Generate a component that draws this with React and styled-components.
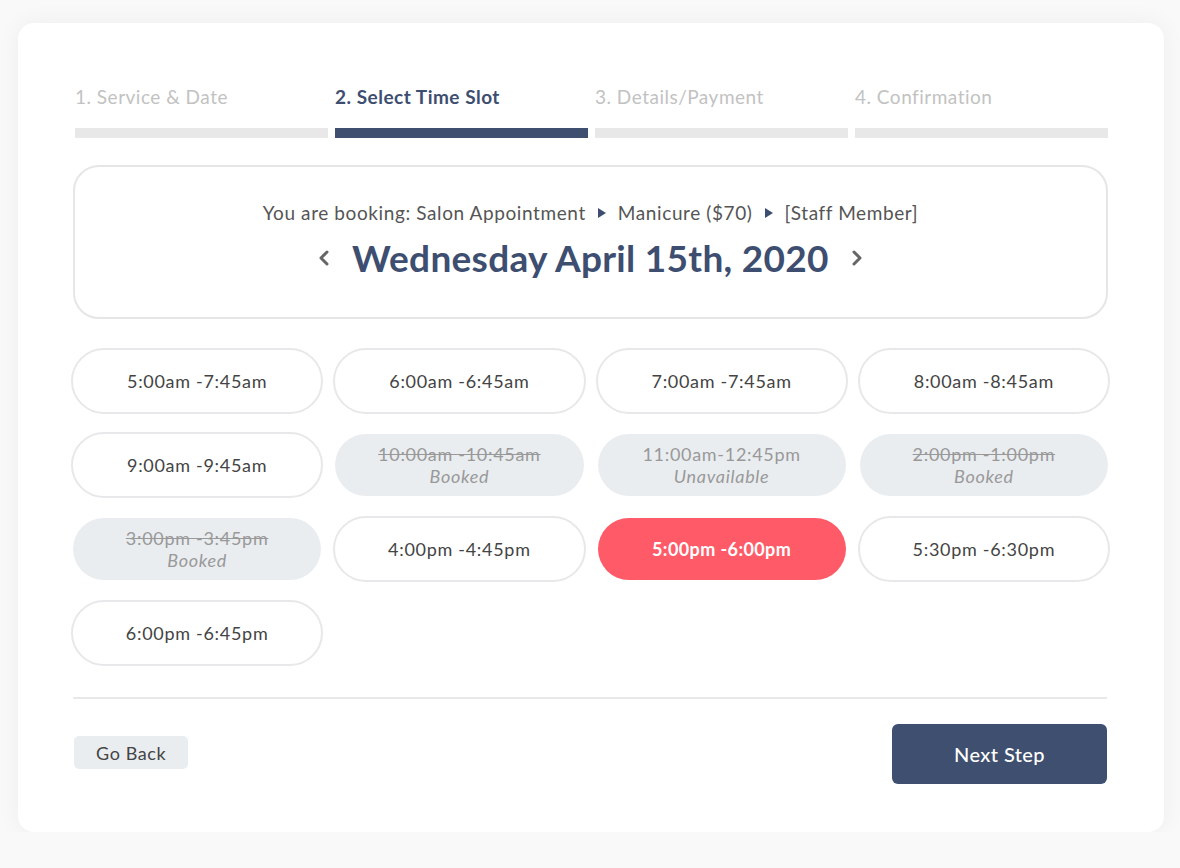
import React, { useState } from 'react';
import styled, { createGlobalStyle, css } from 'styled-components';

const GlobalStyle = createGlobalStyle`
  body {
    margin: 0;
    background: #f9f9f9;
    font-family: Lato, "Open Sans", sans-serif;
  }
`;

const Card = styled.div`
  box-sizing: border-box;
  width: 1146px;
  height: 809px;
  margin: 23px 0 0 18px;
  padding: 62px 54px 49px 53px;
  background: #fff;
  border-radius: 16px;
  box-shadow: 0 0 24px rgba(0, 0, 0, 0.05);
`;

const Steps = styled.div`
  display: grid;
  grid-template-columns: repeat(4, 1fr);
  gap: 7px;
  margin: 0 2px 0 4px;
`;

const Step = styled.div`
  display: flex;
  flex-direction: column;
  gap: 19px;
  font-size: 19px;
  line-height: 24px;
  letter-spacing: 0.5px;
  color: ${p => (p.active ? '#3d4e70' : '#c2c2c2')};
  font-weight: ${p => (p.active ? 700 : 400)};

  &::after {
    content: '';
    height: 10px;
    background: ${p => (p.active ? '#3f4f70' : '#e8e8e8')};
  }
`;

const BookingBox = styled.div`
  margin: 27px 2px 0 2px;
  height: 154px;
  box-sizing: border-box;
  border: 2px solid #e6e6e6;
  border-radius: 26px;
  padding-top: 34px;
  display: flex;
  flex-direction: column;
  align-items: center;
`;

const Crumbs = styled.div`
  display: flex;
  align-items: center;
  gap: 12px;
  font-size: 19px;
  line-height: 24px;
  letter-spacing: 0.6px;
  color: #555;
`;

const Arrow = styled.span`
  width: 0;
  height: 0;
  border-top: 5px solid transparent;
  border-bottom: 5px solid transparent;
  border-left: 8px solid #3d4e70;
`;

const DateRow = styled.div`
  display: flex;
  align-items: center;
  gap: 22px;
  margin-top: 10px;
`;

const DateTitle = styled.h1`
  margin: 0;
  font-size: 37px;
  line-height: 46px;
  letter-spacing: 0.3px;
  font-weight: 700;
  color: #3d4e70;
`;

const NavButton = styled.button`
  border: 0;
  background: none;
  padding: 0;
  display: flex;
  color: #666;
  cursor: pointer;
`;

const Grid = styled.div`
  display: grid;
  grid-template-columns: repeat(4, 1fr);
  column-gap: 10px;
  row-gap: 18px;
  margin-top: 29px;
`;

const Slot = styled.button`
  height: 66px;
  box-sizing: border-box;
  border-radius: 33px;
  border: 2px solid #e8e8ea;
  background: #fff;
  background-clip: padding-box;
  font-family: inherit;
  font-size: 18px;
  letter-spacing: 0.7px;
  color: #444;
  display: flex;
  flex-direction: column;
  align-items: center;
  justify-content: center;
  cursor: pointer;

  ${p =>
    p.disabled &&
    css`
      border-color: transparent;
      background: #eaedf0;
      background-clip: padding-box;
      color: #999;
      cursor: default;
      line-height: 22px;
    `}

  ${p =>
    p.selected &&
    css`
      border-color: transparent;
      background: #ff5a67;
      background-clip: padding-box;
      color: #fff;
      font-weight: 700;
      letter-spacing: 0.4px;
    `}
`;

const SlotTime = styled.span`
  text-decoration: ${p => (p.struck ? 'line-through' : 'none')};
`;

const SlotNote = styled.span`
  font-style: italic;
`;

const Divider = styled.hr`
  margin: 31px 3px 0 2px;
  border: 0;
  height: 2px;
  background: #e8e8e8;
`;

const Footer = styled.div`
  display: flex;
  justify-content: space-between;
  align-items: center;
  margin: 25px 3px 0 3px;
`;

const BackButton = styled.button`
  height: 33px;
  margin-top: -3px;
  padding: 0 22px;
  border: 0;
  border-radius: 5px;
  background: #eaedf0;
  font-family: inherit;
  font-size: 18px;
  letter-spacing: 0.6px;
  color: #444;
  cursor: pointer;
`;

const NextButton = styled.button`
  width: 215px;
  height: 60px;
  border: 0;
  border-radius: 6px;
  background: #3f4f70;
  color: #fff;
  font-family: inherit;
  font-size: 20px;
  letter-spacing: 0.4px;
  font-weight: 500;
  cursor: pointer;
`;

const steps = ['1. Service & Date', '2. Select Time Slot', '3. Details/Payment', '4. Confirmation'];

const slots = [
  { time: '5:00am -7:45am' },
  { time: '6:00am -6:45am' },
  { time: '7:00am -7:45am' },
  { time: '8:00am -8:45am' },
  { time: '9:00am -9:45am' },
  { time: '10:00am -10:45am', status: 'Booked' },
  { time: '11:00am-12:45pm', status: 'Unavailable' },
  { time: '2:00pm -1:00pm', status: 'Booked' },
  { time: '3:00pm -3:45pm', status: 'Booked' },
  { time: '4:00pm -4:45pm' },
  { time: '5:00pm -6:00pm' },
  { time: '5:30pm -6:30pm' },
  { time: '6:00pm -6:45pm' },
];

const Chevron = ({ dir }) => (
  <svg width="12" height="18" viewBox="0 0 12 18" fill="none" stroke="currentColor" strokeWidth="3" strokeLinecap="round" strokeLinejoin="round">
    {dir === 'left' ? <polyline points="9,3 3,9 9,15" /> : <polyline points="3,3 9,9 3,15" />}
  </svg>
);

export default function App() {
  const [selected, setSelected] = useState('5:00pm -6:00pm');

  return (
    <>
      <GlobalStyle />
      <Card>
        <Steps>
          {steps.map((s, i) => (
            <Step key={s} active={i === 1}>{s}</Step>
          ))}
        </Steps>

        <BookingBox>
          <Crumbs>
            <span>You are booking: Salon Appointment</span>
            <Arrow />
            <span>Manicure ($70)</span>
            <Arrow />
            <span>[Staff Member]</span>
          </Crumbs>
          <DateRow>
            <NavButton><Chevron dir="left" /></NavButton>
            <DateTitle>Wednesday April 15th, 2020</DateTitle>
            <NavButton><Chevron dir="right" /></NavButton>
          </DateRow>
        </BookingBox>

        <Grid>
          {slots.map(s => (
            <Slot
              key={s.time}
              disabled={!!s.status}
              selected={selected === s.time}
              onClick={() => setSelected(s.time)}
            >
              <SlotTime struck={s.status === 'Booked'}>{s.time}</SlotTime>
              {s.status && <SlotNote>{s.status}</SlotNote>}
            </Slot>
          ))}
        </Grid>

        <Divider />

        <Footer>
          <BackButton>Go Back</BackButton>
          <NextButton>Next Step</NextButton>
        </Footer>
      </Card>
    </>
  );
}
